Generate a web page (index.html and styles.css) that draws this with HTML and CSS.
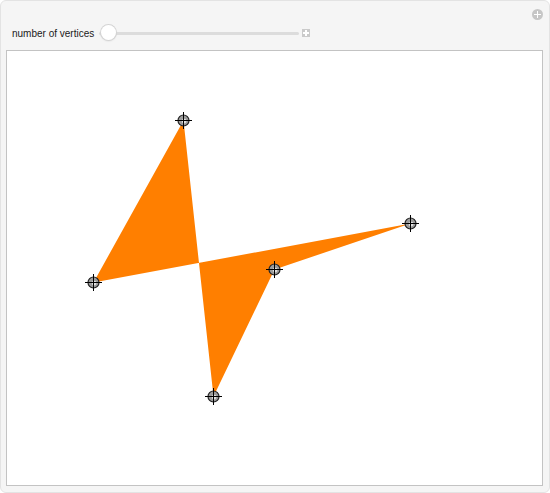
FILE: index.html
```html
<!DOCTYPE html>
<html lang="en">
<head>
<meta charset="UTF-8">
<meta name="viewport" content="width=device-width, initial-scale=1.0">
<title>Polygon Vertices</title>
<link rel="stylesheet" href="styles.css">
</head>
<body>
<div class="panel">
    <div class="panel-top">
        <span class="round-plus"></span>
    </div>
    <div class="controls">
        <span class="control-label">number of vertices</span>
        <div class="slider">
            <div class="slider-track"></div>
            <div class="slider-thumb"></div>
        </div>
        <span class="square-plus"></span>
    </div>
    <div class="plot">
        <svg width="535" height="434" viewBox="7 51 535 434">
            <defs>
                <g id="locator">
                    <circle r="5.5" fill="#9c9c9c" stroke="#222" stroke-width="1.2"/>
                    <circle r="2.4" cx="0.6" cy="0.6" fill="#e2e2e2"/>
                    <line x1="-8.5" y1="0" x2="8.5" y2="0" stroke="#000" stroke-width="1"/>
                    <line x1="0" y1="-8.5" x2="0" y2="8.5" stroke="#000" stroke-width="1"/>
                </g>
            </defs>
            <!-- polygon through the locator points -->
            <polygon points="183.5,120.5 213.5,396.5 274.5,269.5 410.5,223.5 93.5,282.5" fill="#ff7f00"/>
            <use href="#locator" x="183.5" y="120.5"/>
            <use href="#locator" x="410.5" y="223.5"/>
            <use href="#locator" x="274.5" y="269.5"/>
            <use href="#locator" x="213.5" y="396.5"/>
            <use href="#locator" x="93.5" y="282.5"/>
        </svg>
    </div>
</div>
</body>
</html>
```

FILE: styles.css
```css
/* Manipulate style panel */
body {
    margin: 0;
    padding: 0;
    background-color: #fff;
    font-family: "Liberation Sans", Arial, sans-serif;
}
.panel {
    box-sizing: border-box;
    width: 550px;
    height: 493px;
    padding: 8px 6px 6px 5px;
    background-color: #f5f5f5;
    border: 1px solid #e3e3e3;
    border-radius: 6px;
}
.panel-top {
    display: flex;
    justify-content: flex-end;
    height: 11px;
}
.round-plus {
    position: relative;
    width: 11px;
    height: 11px;
    border-radius: 50%;
    background-color: #c6c6c6;
}
.round-plus::before, .round-plus::after {
    content: "";
    position: absolute;
    background-color: #fff;
}
.round-plus::before {
    left: 2px;
    top: 5px;
    width: 7px;
    height: 1px;
}
.round-plus::after {
    left: 5px;
    top: 2px;
    width: 1px;
    height: 7px;
}
.controls {
    display: flex;
    align-items: center;
    height: 18px;
    margin: 4px 0 8px 0;
    padding-left: 6px;
}
.control-label {
    font-size: 10px;
    color: #1a1a1a;
    margin-right: 5px;
}
.slider {
    position: relative;
    width: 200px;
    height: 18px;
    display: flex;
    align-items: center;
}
.slider-track {
    width: 100%;
    height: 3px;
    border-radius: 2px;
    background-color: #dcdcdc;
}
.slider-thumb {
    position: absolute;
    left: 2px;
    top: 1px;
    width: 15px;
    height: 15px;
    border-radius: 50%;
    background-color: #fff;
    box-shadow: 0 0 0 1px #d4d4d4, 0 1px 2px rgba(0, 0, 0, 0.15);
}
.square-plus {
    position: relative;
    width: 8px;
    height: 8px;
    margin-left: 3px;
    background-color: #cacaca;
}
.square-plus::before, .square-plus::after {
    content: "";
    position: absolute;
    background-color: #fff;
}
.square-plus::before {
    left: 1px;
    top: 3px;
    width: 6px;
    height: 2px;
}
.square-plus::after {
    left: 3px;
    top: 1px;
    width: 2px;
    height: 6px;
}
.plot {
    width: 537px;
    height: 436px;
    box-sizing: border-box;
    background-color: #fff;
    border: 1px solid #c3c3c3;
}
.plot svg {
    display: block;
}
```
